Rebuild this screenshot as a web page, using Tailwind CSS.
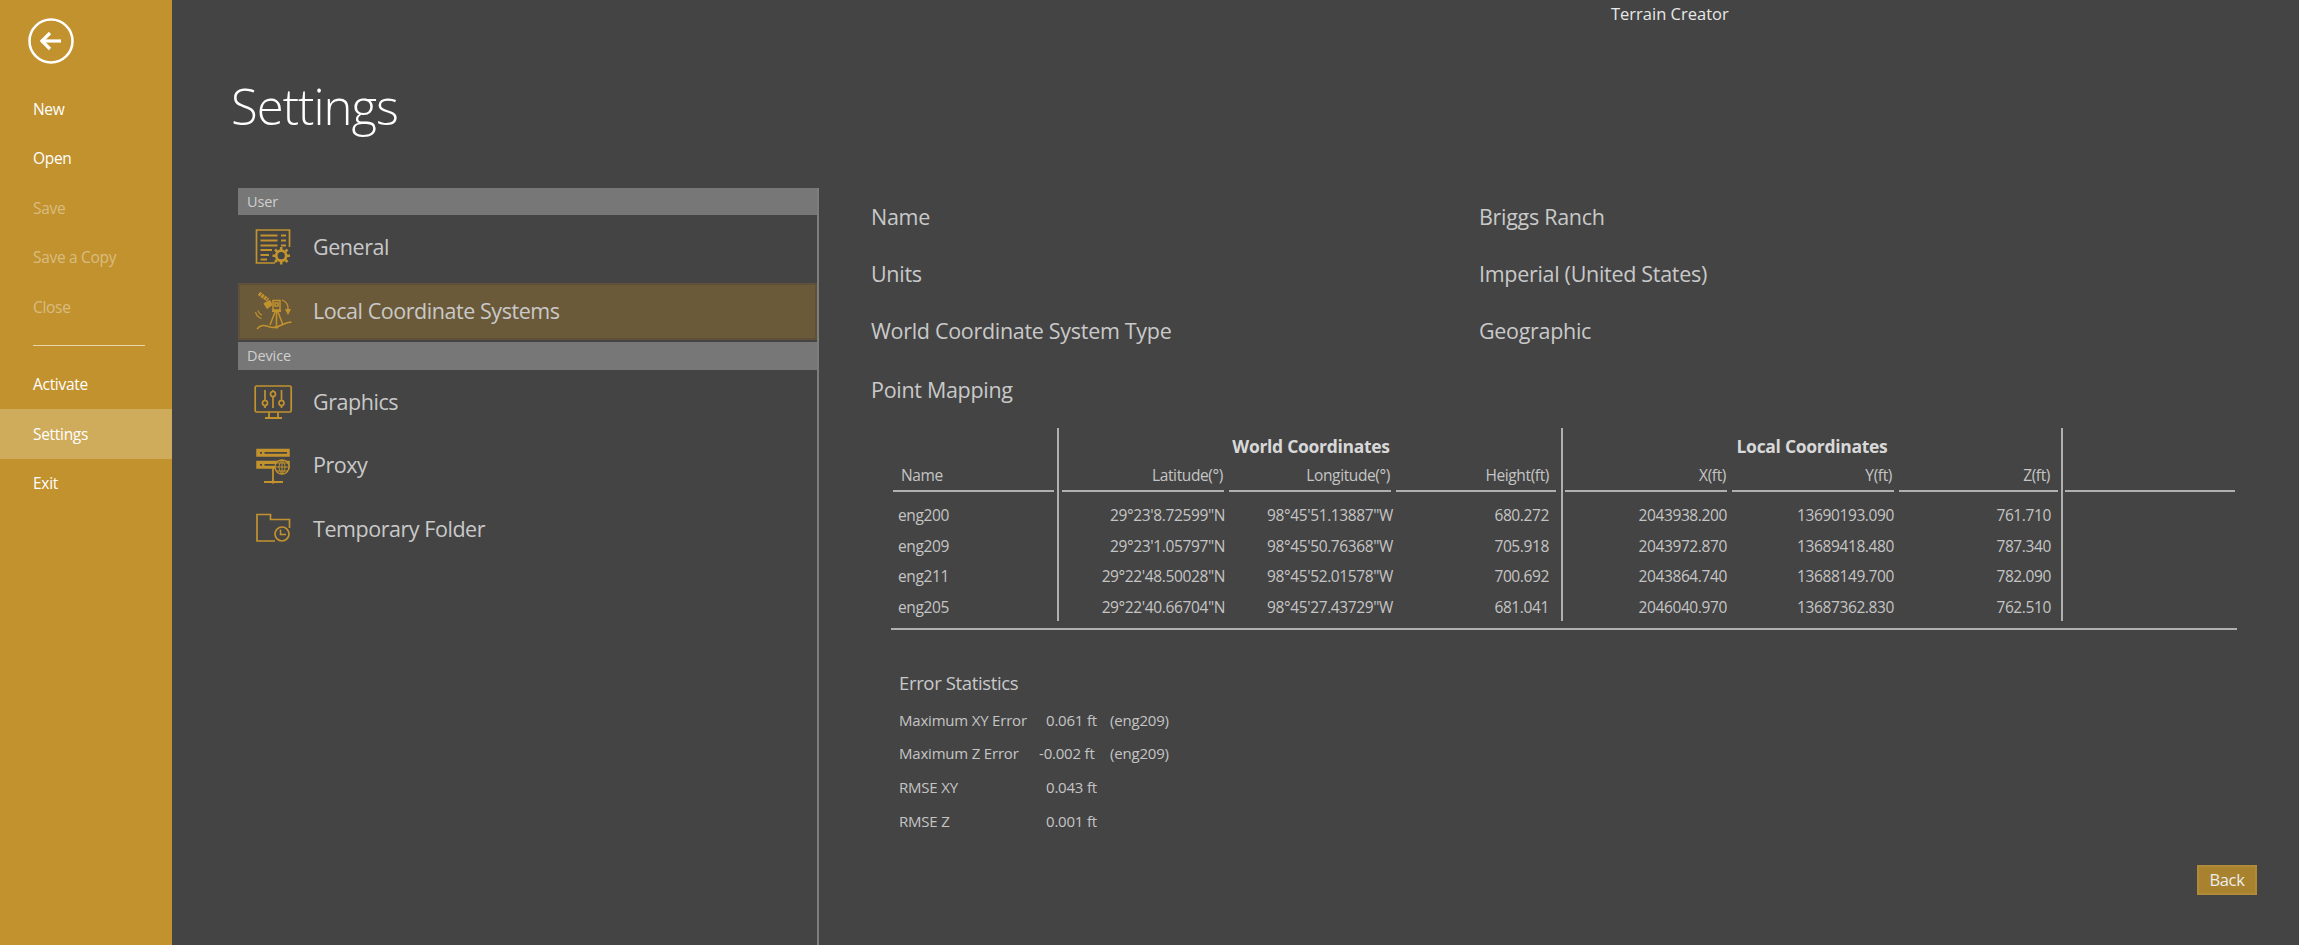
<!DOCTYPE html>
<html><head><meta charset="utf-8">
<script src="https://cdn.jsdelivr.net/npm/@tailwindcss/browser@4"></script>
<title>Settings</title></head>
<body class="m-0 bg-[#444444]">
<div class="flex w-[2299px] h-[945px] overflow-hidden bg-[#444444] font-['Open_Sans',sans-serif] text-[#c9c9c9]">
  <aside class="w-[172px] shrink-0 bg-[#c2922e] text-white text-[15.5px] tracking-[-0.3px]">
    <div class="h-[84px] pl-[28px] pt-[18px]">
      <svg width="46" height="46" viewBox="0 0 46 46" fill="none" stroke="#fff"><circle cx="23" cy="23" r="21.5" stroke-width="2.5"/><path d="M13 23H33" stroke-width="3.2"/><path d="M22 15L14 23L22 31" stroke-width="3.2"/></svg>
    </div>
    <div class="h-[50px] pl-[33px] pt-[1px] flex items-center">New</div>
    <div class="h-[49px] pl-[33px] pt-[1px] flex items-center">Open</div>
    <div class="h-[50px] pl-[33px] pt-[1px] flex items-center text-white/40">Save</div>
    <div class="h-[49px] pl-[33px] pt-[1px] flex items-center text-white/40">Save a Copy</div>
    <div class="h-[50px] pl-[33px] pt-[1px] flex items-center text-white/40">Close</div>
    <div class="h-[28px] flex items-end"><div class="ml-[33px] w-[112px] h-px bg-white/60 mb-[14px]"></div></div>
    <div class="h-[49px] pl-[33px] pt-[1px] flex items-center">Activate</div>
    <div class="h-[50px] pl-[33px] pt-[1px] flex items-center bg-[#cfab5c]">Settings</div>
    <div class="h-[49px] pl-[33px] pt-[1px] flex items-center">Exit</div>
  </aside>
  <main class="flex-1 flex flex-col min-w-0">
    <div class="h-[29px] pl-[1439px] flex items-center text-[16.5px] tracking-[0px] text-[#e8e8e8] whitespace-nowrap">Terrain Creator</div>
    <h1 class="h-[159px] pl-[59px] pt-[49px] m-0 text-[49px] leading-[56px] font-light tracking-[-1px] text-white">Settings</h1>
    <div class="flex flex-1 min-h-0">
      <section class="ml-[66px] w-[581px] shrink-0 border-r-2 border-[#7d7d7d] text-[21.5px] tracking-[-0.45px]">
        <div class="h-[27px] bg-[#777777] pl-[9px] flex items-center text-[14.5px] tracking-[-0.1px] text-[#cfcfcf]">User</div>
        <div class="h-[64px] pl-[15px] flex items-center gap-[20px]">
          <svg class="w-[40px] h-[40px]" viewBox="0 0 40 40" fill="none" stroke="#c2922e">
            <path d="M22 36H3.500V3H36.500V20" stroke-width="1.700"/>
            <path d="M7.500 8.500H24.500M7.500 13.500H24.500M7.500 18.500H24.500M7.500 23H19M7.500 28H16M7.500 32.500H14" stroke-width="1.800"/>
            <path d="M28 8.500H33M28 13.500H33M28 18.500H33" stroke-width="1.800"/>
            <circle cx="28.200" cy="28.700" r="5" stroke-width="2.800"/>
            <path d="M28.200 20V23M28.200 34.500V37.500M19.500 28.700H22.500M34 28.700H37M22 22.500L24 24.500M32.500 33L34.500 35M22 35L24 33M32.500 24.500L34.500 22.500" stroke-width="2.600"/>
          </svg>
          <span>General</span>
        </div>
        <div class="mt-[4px] h-[57px] pl-[13px] flex items-center gap-[20px] bg-[#6b5a3a] border-2 border-[#5f5139]">
          <svg class="w-[40px] h-[40px]" viewBox="0 0 40 40" fill="none" stroke="#c2922e">
            <path d="M6 1.5L15 8" stroke-width="4" stroke-dasharray="2.4 .8"/>
            <path d="M11 11.5L17 8.5L19 13L14 16.5Z" fill="#c2922e" stroke-width="1"/>
            <path d="M5 18.5A6 6 0 0 0 9 23M2.5 20A9 9 0 0 0 8.5 26.500" stroke-width="1.1"/>
            <path d="M20 8.500H27V18H20ZM22 11H25V14H22Z" stroke-width="1.500"/>
            <path d="M19 19H28" stroke-width="2"/>
            <path d="M22 20L17 33M25 20L30 33M23.500 20V33" stroke-width="1.500"/>
            <path d="M29 8A9 9 0 0 1 35 17" stroke-width="1.300"/><path d="M32 17H38L35 23Z" fill="#c2922e" stroke="none"/>
            <path d="M4 37C10 30 15 36 21 35.500C28 35 31 30 38.500 30" stroke-width="1.500"/>
            <circle cx="23.500" cy="35" r="1.700" fill="#c2922e" stroke="none"/>
          </svg>
          <span>Local Coordinate Systems</span>
        </div>
        <div class="mt-[2px] h-[28px] bg-[#777777] pl-[9px] flex items-center text-[14.5px] tracking-[-0.1px] text-[#cfcfcf]">Device</div>
        <div class="h-[63.5px] pl-[15px] flex items-center gap-[20px]">
          <svg class="w-[40px] h-[40px]" viewBox="0 0 40 40" fill="none" stroke="#c2922e" stroke-width="1.700">
            <rect x="2.200" y="4" width="36" height="26" rx="1.500"/>
            <path d="M16 30V35M25 30V35M12 36H29" stroke-width="1.800"/>
            <path d="M12 8V18.500M12 23.500V26M20 8V9.500M20 14.500V26M28.500 8V18.500M28.500 23.500V26"/>
            <circle cx="12" cy="21" r="2.500"/><circle cx="20" cy="12" r="2.500"/><circle cx="28.500" cy="21" r="2.500"/>
          </svg>
          <span>Graphics</span>
        </div>
        <div class="h-[63.5px] pl-[15px] flex items-center gap-[20px]">
          <svg class="w-[40px] h-[40px]" viewBox="0 0 40 40" fill="none" stroke="#c2922e">
            <path d="M4 4.500H36V11H4ZM4 16.500H36V23H4Z" stroke-width="1.500" fill="#c2922e"/>
            <path d="M7 7.800H9M7 19.800H9M11.500 7.800H34M11.500 19.800H25" stroke="#444" stroke-width="1.700"/>
            <path d="M20 23V37M11 37H30" stroke-width="1.800"/><circle cx="20" cy="37" r="1.800" fill="#c2922e" stroke="none"/>
            <circle cx="29" cy="22" r="7" fill="#444" stroke-width="1.300"/>
            <path d="M22 22H36M29 15V29M23.500 18H34.500M23.500 26H34.500M29 15C25 19 25 25 29 29C33 25 33 19 29 15" stroke-width="1"/>
          </svg>
          <span>Proxy</span>
        </div>
        <div class="h-[63.5px] pl-[15px] flex items-center gap-[20px]">
          <svg class="w-[40px] h-[40px]" viewBox="0 0 40 40" fill="none" stroke="#c2922e" stroke-width="1.700">
            <path d="M22 32H4V5.500H17.500V10.500H36.500V19"/>
            <circle cx="29" cy="25" r="7"/>
            <path d="M27.500 20.500V25.500H33" stroke-width="1.500"/>
          </svg>
          <span>Temporary Folder</span>
        </div>
      </section>
      <section class="flex-1 min-w-0 pl-[52px]">
        <div class="text-[21.5px] tracking-[-0.3px] pt-[1px]">
          <div class="h-[57px] flex items-center"><span class="w-[608px]">Name</span><span>Briggs Ranch</span></div>
          <div class="h-[57px] flex items-center"><span class="w-[608px]">Units</span><span>Imperial (United States)</span></div>
          <div class="h-[57px] flex items-center"><span class="w-[608px]">World Coordinate System Type</span><span>Geographic</span></div>
          <div class="h-[60px] flex items-center">Point Mapping</div>
        </div>
        <div class="ml-[20px] mt-[8px] w-[1346px] flex h-[193px] text-[15.5px] tracking-[-0.38px] leading-[20px] text-[#c4c4c4]">
          <div class="w-[166px] shrink-0 flex flex-col">
            <div class="h-[36px] shrink-0"></div>
            <div class="ml-[2px] mr-[3px] h-[28px] shrink-0 pl-[8px] pt-[1px] border-b-2 border-[#b0b0b0]">Name</div>
            <div class="mt-[13px] pl-[7px] h-[30.500px] shrink-0">eng200</div>
            <div class="pl-[7px] h-[30.500px] shrink-0">eng209</div>
            <div class="pl-[7px] h-[30.500px] shrink-0">eng211</div>
            <div class="pl-[7px] h-[30.500px] shrink-0">eng205</div>
          </div>
          <div class="w-[504px] shrink-0 border-l-2 border-[#b0b0b0] flex flex-col">
            <div class="h-[36px] shrink-0 pt-[8px] text-center font-bold text-[17.5px] tracking-[-0.3px] text-[#d8d8d8] pl-[2px]">World Coordinates</div>
            <div class="grid shrink-0 grid-cols-[162px_162px_160px] gap-x-[5px] ml-[3px] text-right">
              <div class="h-[28px] pt-[1px] pr-[1px] border-b-2 border-[#b0b0b0]">Latitude(°)</div>
              <div class="h-[28px] pt-[1px] pr-[1px] border-b-2 border-[#b0b0b0]">Longitude(°)</div>
              <div class="h-[28px] pt-[1px] pr-[7px] border-b-2 border-[#b0b0b0]">Height(ft)</div>
            </div>
            <div class="grid shrink-0 grid-cols-[163px_163px_158px] gap-x-[5px] ml-[3px] mt-[13px] text-right auto-rows-[30.500px]">
              <div>29°23'8.72599"N</div><div>98°45'51.13887"W</div><div class="pr-[7px]">680.272</div>
              <div>29°23'1.05797"N</div><div>98°45'50.76368"W</div><div class="pr-[7px]">705.918</div>
              <div>29°22'48.50028"N</div><div>98°45'52.01578"W</div><div class="pr-[7px]">700.692</div>
              <div>29°22'40.66704"N</div><div>98°45'27.43729"W</div><div class="pr-[7px]">681.041</div>
            </div>
          </div>
          <div class="w-[500px] shrink-0 border-l-2 border-[#b0b0b0] flex flex-col">
            <div class="h-[36px] shrink-0 pt-[8px] text-center font-bold text-[17.5px] tracking-[-0.3px] text-[#d8d8d8]">Local Coordinates</div>
            <div class="grid shrink-0 grid-cols-[162px_162px_159px] gap-x-[5px] ml-[2px] text-right">
              <div class="h-[28px] pt-[1px] pr-[1px] border-b-2 border-[#b0b0b0]">X(ft)</div>
              <div class="h-[28px] pt-[1px] pr-[2px] border-b-2 border-[#b0b0b0]">Y(ft)</div>
              <div class="h-[28px] pt-[1px] pr-[8px] border-b-2 border-[#b0b0b0]">Z(ft)</div>
            </div>
            <div class="grid shrink-0 grid-cols-[162px_162px_159px] gap-x-[5px] ml-[2px] mt-[13px] text-right auto-rows-[30.500px]">
              <div>2043938.200</div><div>13690193.090</div><div class="pr-[7px]">761.710</div>
              <div>2043972.870</div><div>13689418.480</div><div class="pr-[7px]">787.340</div>
              <div>2043864.740</div><div>13688149.700</div><div class="pr-[7px]">782.090</div>
              <div>2046040.970</div><div>13687362.830</div><div class="pr-[7px]">762.510</div>
            </div>
          </div>
          <div class="flex-1 border-l-2 border-[#b0b0b0]">
            <div class="h-[64px] ml-[2px] mr-[2px] border-b-2 border-[#b0b0b0]"></div>
          </div>
        </div>
        <div class="ml-[20px] mt-[7px] w-[1346px] h-[2px] bg-[#b0b0b0]"></div>
        <div class="ml-[28px] mt-[41px] text-[18.500px] leading-[24px] tracking-[-0.35px]">Error Statistics</div>
        <div class="ml-[28px] mt-[15px] text-[15px] leading-[20px] tracking-[-0.2px] text-[#c4c4c4]">
          <div class="grid grid-cols-[147px_64px_auto] h-[33px]"><span>Maximum XY Error</span><span>0.061 ft</span><span>(eng209)</span></div>
          <div class="grid grid-cols-[147px_64px_auto] h-[34px]"><span>Maximum Z Error</span><span class="-ml-[7px]">-0.002 ft</span><span>(eng209)</span></div>
          <div class="grid grid-cols-[147px_64px_auto] h-[34px]"><span>RMSE XY</span><span>0.043 ft</span></div>
          <div class="grid grid-cols-[147px_64px_auto] h-[34px]"><span>RMSE Z</span><span>0.001 ft</span></div>
        </div>
        <div class="flex justify-end pr-[42px] mt-[20px]">
          <button class="w-[60px] h-[30px] bg-[#a8822f] border-2 border-[#b08a36] text-[#ececec] text-[16.5px] tracking-[-0.3px] leading-none">Back</button>
        </div>
      </section>
    </div>
  </main>
</div>
</body></html>
